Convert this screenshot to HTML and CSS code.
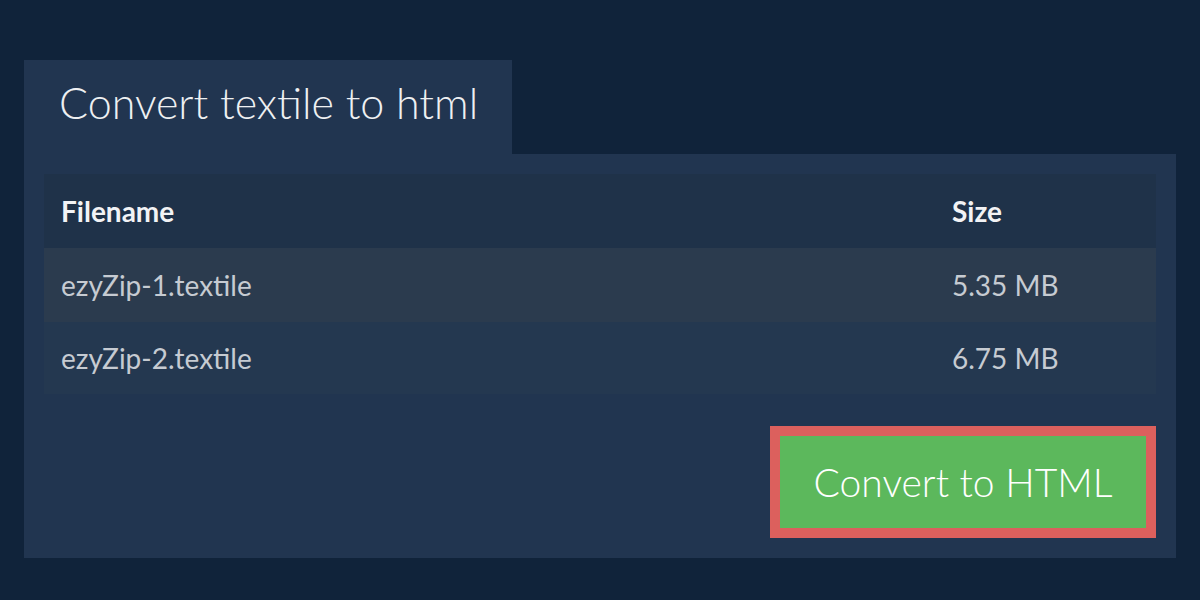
FILE: index.html
```html
<!DOCTYPE html>
<html>
<head>
<meta charset="utf-8">
<link rel="stylesheet" href="styles.css">
</head>
<body>
<div class="wrap">
  <div class="tab">Convert textile to html</div>
  <div class="panel">
    <div class="table">
      <div class="row head"><div class="c-name">Filename</div><div class="c-size">Size</div></div>
      <div class="row odd"><div class="c-name">ezyZip-1.textile</div><div class="c-size">5.35 MB</div></div>
      <div class="row even"><div class="c-name">ezyZip-2.textile</div><div class="c-size">6.75 MB</div></div>
    </div>
    <div class="actions">
      <button class="convert">Convert to HTML</button>
    </div>
  </div>
</div>
</body>
</html>
```
FILE: styles.css
```css
html, body {
  margin: 0;
  padding: 0;
  background: #10233a;
  font-family: Lato, "Open Sans", sans-serif;
}
.wrap {
  padding: 60px 24px 0 24px;
  width: 1152px;
}
.tab {
  display: inline-flex;
  align-items: center;
  box-sizing: border-box;
  width: 488px;
  height: 94px;
  padding: 0 0 10px 35px;
  background: #213550;
  color: #eef0f2;
  font-size: 43px;
  font-weight: 300;
  vertical-align: top;
}
.panel {
  background: #213550;
  padding: 20px 20px 20px 20px;
  display: flex;
  flex-direction: column;
}
.table {
  display: flex;
  flex-direction: column;
}
.row {
  display: grid;
  grid-template-columns: 891px 1fr;
  align-items: center;
  height: 74px;
  padding-left: 17px;
  font-size: 28px;
  color: #c6cbd2;
}
.row.head {
  background: #1f3249;
  color: #f2f3f5;
  font-weight: 700;
}
.row.odd {
  background: #2b3b4e;
}
.row.even {
  background: #243850;
  height: 72px;
}
.actions {
  display: flex;
  justify-content: flex-end;
  margin-top: 32px;
}
.convert {
  box-sizing: border-box;
  width: 386px;
  height: 112px;
  border: 10px solid #dc605d;
  background: #5cb85c;
  color: #ffffff;
  font-family: Lato, "Open Sans", sans-serif;
  font-size: 39px;
  font-weight: 300;
  padding: 0;
  cursor: pointer;
}
```
